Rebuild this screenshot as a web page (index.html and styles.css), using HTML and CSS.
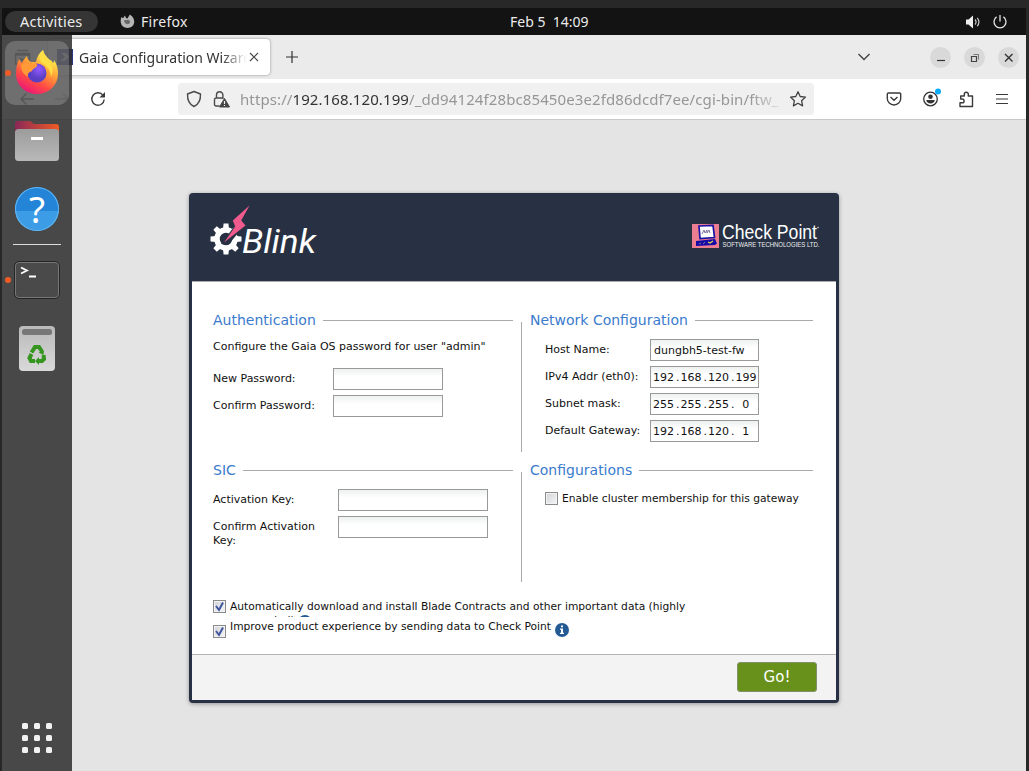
FILE: index.html
```html
<!DOCTYPE html>
<html lang="en">
<head>
<meta charset="utf-8">
<title>Gaia Configuration Wizard</title>
<link rel="stylesheet" href="styles.css">
</head>
<body>
<div class="desktop">
  <header class="topbar">
    <div class="topbar-left">
      <span class="activities"><span class="t-act">Activities</span></span>
      <svg class="app-icon" width="15" height="15" viewBox="0 0 15 15"><path d="M1.5 3 3 4.2 5 1.6 6 4 7.500 4.400 9.800.5C12.500 2 14.500 5 14.200 8.500A6.800 6.500 0 0 1 .8 8.500C.5 6.500.8 4.500 1.500 3Z" fill="#b5b5b5"/><path d="M4 6.500c2-1 2.500 0 4-.8C10.500 6 11 9 8.500 10 6 10.600 4.200 9 4 6.500Z" fill="#686868"/></svg>
      <span class="t-ff">Firefox</span>
    </div>
    <div class="clock">Feb 5&nbsp; 14:09</div>
    <div class="topbar-right">
      <svg width="16" height="16" viewBox="0 0 16 16"><path d="M1 5.500h2.500L8 1.500v13L3.500 10.500H1Z" fill="#eee"/><path d="M10 5.500a3.500 3.500 0 0 1 0 5M12.200 3.800a6 6 0 0 1 0 8.400" fill="none" stroke="#ccc" stroke-width="1.200"/></svg>
      <svg width="16" height="16" viewBox="0 0 16 16" fill="none" stroke="#e4e4e4" stroke-width="1.300"><path d="M4.600 2.900a6 6 0 1 0 6.800 0M8 1v6.500"/></svg>
    </div>
  </header>

  <main class="window">
    <div class="tabbar">
      <svg class="recent" width="17" height="17" viewBox="0 0 17 17" fill="none" stroke="#333" stroke-width="1.400"><path d="M3 1.500h11M1.500 6V4.500h14V15h-14V6h14M6 9l2.500 2.500L11 9"/></svg>
      <div class="tab">
        <svg width="16" height="16" viewBox="0 0 16 16"><path d="M0 0h16v16H0Z" fill="#29367e"/><path d="M4 4h5l3 4-4 4H3l5-4Z" fill="#bbc3e8"/></svg>
        <span class="tab-title">Gaia Configuration Wizard</span>
        <svg class="tab-close" width="10" height="10" viewBox="0 0 10 10"><path d="m1 1 8 8M9 1 1 9" stroke="#444" stroke-width="1.100"/></svg>
      </div>
      <svg class="plus" width="14" height="14" viewBox="0 0 14 14"><path d="M7 1v12M1 7h12" stroke="#333" stroke-width="1.200"/></svg>
      <svg class="chevron" width="14" height="10" viewBox="0 0 14 10"><path d="m1.500 2 5.500 5.500L12.500 2" fill="none" stroke="#444" stroke-width="1.400"/></svg>
      <div class="win-buttons">
        <span class="wb"><svg width="21" height="21"><path d="M7 13.500h8" stroke="#333" stroke-width="1.200"/></svg></span>
        <span class="wb"><svg width="21" height="21" fill="none" stroke="#444"><path d="M7.500 9.500h5v5h-5Z" stroke-width="1.200"/><path d="M9.500 7.500h5v5" stroke="#777"/></svg></span>
        <span class="wb"><svg width="21" height="21"><path d="m7 7 7.500 7.500m0-7.500L7 14.500" stroke="#333" stroke-width="1.400"/></svg></span>
      </div>
    </div>
    <div class="toolbar">
      <svg class="nav-back" width="16" height="16" viewBox="0 0 16 16" fill="none" stroke="#222" stroke-width="1.400"><path d="M15 8H2m5.500-5.500L2 8l5.500 5.500"/></svg>
      <svg class="nav-fwd" width="16" height="16" viewBox="0 0 16 16" fill="none" stroke="#999" stroke-width="1.400"><path d="M1 8h13M8.500 2.500 14 8l-5.500 5.500"/></svg>
      <svg class="reload" width="16" height="16" viewBox="0 0 16 16"><path d="M13 4.300A6.200 6.200 0 1 0 14.200 8.500" fill="none" stroke="#3a3a3a" stroke-width="1.400"/><path d="M15 1v5.500H9.500Z" fill="#3a3a3a"/></svg>
      <div class="urlbar">
        <svg width="16" height="18" viewBox="0 0 16 18"><path d="M8 1.500 14.500 4C14.700 10 12.500 14.500 8 16.500 3.500 14.500 1.300 10 1.500 4Z" fill="none" stroke="#4a4a4a" stroke-width="1.400" stroke-linejoin="round"/></svg>
        <svg class="lock" width="17" height="18" viewBox="0 0 17 18"><path d="M6.500 16H3a1.500 1.500 0 0 1-1.500-1.500v-5A1.500 1.500 0 0 1 3 8h7.500M3.500 8V5a3.200 3.200 0 0 1 6.400 0v4" fill="none" stroke="#4a4a4a" stroke-width="1.400"/><path d="M11.500 8.500 16.500 17h-10Z" fill="#444" stroke="#444" stroke-linejoin="round"/><path d="M11.500 11v3m0 1v1" stroke="#f0f0f0" stroke-width="1.200"/></svg>
        <span class="url">https://<b>192.168.120.199</b>/_dd94124f28bc85450e3e2fd86dcdf7ee/cgi-bin/ftw_</span>
        <svg class="star" width="18" height="18" viewBox="0 0 18 18"><path d="m9 1.700 2.200 4.800 5.300.6-3.900 3.600 1 5.200L9 13.300l-4.600 2.600 1-5.200L1.500 7.100l5.300-.6Z" fill="none" stroke="#444" stroke-width="1.300" stroke-linejoin="round"/></svg>
      </div>
      <div class="tools">
        <svg width="16" height="16" viewBox="0 0 16 16" fill="none" stroke="#3a3a3a" stroke-width="1.400"><path d="M2.500 2h11a1.200 1.200 0 0 1 1.200 1.200v4.300a6.700 6.500 0 0 1-13.400 0V3.200A1.200 1.200 0 0 1 2.500 2ZM4.500 6 8 9.200 11.500 6"/></svg>
        <svg width="22" height="22" viewBox="0 0 22 22"><circle cx="10.500" cy="13" r="6.800" fill="none" stroke="#333" stroke-width="1.300"/><circle cx="10.500" cy="10.800" r="2.300" fill="#333"/><path d="M6.300 14h8.400c0 2-1.900 3.500-4.200 3.500S6.300 16 6.300 14Z" fill="#333"/><circle cx="18" cy="5.500" r="3" fill="#09adfa"/></svg>
        <svg width="16" height="17" viewBox="0 0 16 17"><path d="M2 15.500h12.500V5H10.300V3.200a2 2 0 0 0-4 0V5H2.700v3h1.500a1.900 1.900 0 0 1 0 3.800H2Z" fill="none" stroke="#3a3a3a" stroke-width="1.400" stroke-linejoin="round"/></svg>
        <svg width="14" height="14" viewBox="0 0 14 14"><path d="M1 2.500h12M1 7h12M1 11.500h12" stroke="#3a3a3a" stroke-width="1.200"/></svg>
      </div>
    </div>

    <div class="page">
      <div class="dialog">
        <div class="brand">
          <svg class="blink" width="112" height="54" viewBox="0 0 112 54">
            <g transform="translate(17 34)" fill="#fff"><circle r="9" fill="none" stroke="#fff" stroke-width="5.500"/>
              <path d="M-3-10-2.400-15.500h4.800L3-10ZM-3 10-2.400 15.500h4.800L3 10ZM-10-3-15.500-2.400v4.800L-10 3ZM10-3 15.500-2.400v4.800L10 3Z"/>
              <path transform="rotate(45)" d="M-3-10-2.400-15.500h4.800L3-10ZM-3 10-2.400 15.500h4.800L3 10ZM-10-3-15.500-2.400v4.800L-10 3ZM10-3 15.500-2.400v4.800L10 3Z"/></g>
            <path d="m27 19-15 20 7 1 12-14Z" fill="#273143"/>
            <path d="m9 32 8 8" stroke="none"/>
            <path d="M40.500.5 23.800 15.500l2.400 6L15 37.500 36.500 20.500l-4.300-5Z" fill="#f05a8c"/>
            <text x="33" y="48" class="blink-text" textLength="74" lengthAdjust="spacingAndGlyphs">Blink</text>
          </svg>
          <svg class="cp" width="130" height="26" viewBox="0 0 130 26">
            <path d="M0 1h27v24H0Z" fill="#ed7d91"/>
            <path d="m7 3 14-.5 1.500 12L8 15.500Z" fill="#fff" stroke="#1b13a4" stroke-width="1.700"/>
            <path d="m4 18 19-2 2 4.500-2 1.500-19 1Z" fill="#170ba6"/>
            <path d="m10 11 2-4 1 3 2-3v3l2-3 1 3M7 21l2-1m2 1 2-2" fill="none" stroke="#81739b"/>
            <path d="m16 19 2 1 3-2" fill="none" stroke="#e9d44a" stroke-width="1.300"/>
            <text x="30" y="16" class="cp-name" textLength="95" lengthAdjust="spacingAndGlyphs">Check Point</text>
            <text x="30.500" y="23.500" class="cp-sub" textLength="97" lengthAdjust="spacingAndGlyphs">SOFTWARE TECHNOLOGIES LTD.</text>
            <circle cx="126" cy="4.500" r=".8" fill="#ddd"/>
          </svg>
        </div>
        <div class="content">
          <div class="quad">
            <section>
              <h2>Authentication</h2>
              <p class="note">Configure the Gaia OS password for user "admin"</p>
              <div class="fields auth">
                <label>New Password:</label><span class="input"></span>
                <label>Confirm Password:</label><span class="input"></span>
              </div>
            </section>
            <i class="divider"></i>
            <section>
              <h2>Network Configuration</h2>
              <div class="fields net">
                <label>Host Name:</label><span class="input host">dungbh5-test-fw</span>
                <label>IPv4 Addr (eth0):</label><span class="input ip"><b>192</b>.<b>168</b>.<b>120</b>.<b>199</b></span>
                <label>Subnet mask:</label><span class="input ip"><b>255</b>.<b>255</b>.<b>255</b>.<b>0</b></span>
                <label>Default Gateway:</label><span class="input ip"><b>192</b>.<b>168</b>.<b>120</b>.<b>1</b></span>
              </div>
            </section>
            <section>
              <h2>SIC</h2>
              <div class="fields sic">
                <label>Activation Key:</label><span class="input"></span>
                <label>Confirm Activation Key:</label><span class="input"></span>
              </div>
            </section>
            <i class="divider short"></i>
            <section>
              <h2>Configurations</h2>
              <div class="cluster"><span class="check"></span><span class="cluster-label">Enable cluster membership for this gateway</span></div>
            </section>
          </div>
          <div class="option first">
            <span class="check"><svg width="11" height="11"><path d="m2 5 3 4L9 1.500" fill="none" stroke="#3f569f" stroke-width="2"/></svg></span>
            <span class="clip">Automatically download and install Blade Contracts and other important data (highly recommended) <svg class="info" width="14" height="14" viewBox="0 0 14 14"><circle cx="7" cy="7" r="7" fill="#255b95"/></svg></span>
          </div>
          <div class="option second">
            <span class="check"><svg width="11" height="11"><path d="m2 5 3 4L9 1.500" fill="none" stroke="#3f569f" stroke-width="2"/></svg></span>
            <span class="label">Improve product experience by sending data to Check Point</span>
            <svg class="info2" width="14" height="14" viewBox="0 0 14 14"><circle cx="7" cy="7" r="7" fill="#255b95"/><path d="M6 2.500h2v1.800H6ZM5 5.500h3v4.300h1V11H5V9.800h1V6.700H5Z" fill="#fff"/></svg>
          </div>
        </div>
        <div class="footer"><span class="go">Go!</span></div>
      </div>
    </div>
  </main>

  <nav class="dock">
    <div class="tile">
      <svg width="44" height="46" viewBox="0 0 44 46">
        <defs>
          <linearGradient id="ff" x1=".8" y1="0" x2=".25" y2="1"><stop offset=".1" stop-color="#fff44f"/><stop offset=".4" stop-color="#ffa436"/><stop offset=".7" stop-color="#ff4a45"/><stop offset="1" stop-color="#e8107f"/></linearGradient>
          <radialGradient id="globe" cx=".6" cy=".3"><stop offset="0" stop-color="#9259ff"/><stop offset="1" stop-color="#5a3fc4"/></radialGradient>
        </defs>
        <path d="M4 10c1 2 2 3 3 4 1-3 3-5 5-7 0 3 2 5 4 6h5c1-5 3-9 7-12 1 5 4 7 7 10 1 0 2 1 3 3 1-1 1-2 1-3 3 4 4 9 4 14a21 20 0 0 1-42 0C1 19 2 14 4 10Z" fill="url(#ff)"/>
        <circle cx="22" cy="24" r="9.500" fill="url(#globe)"/>
        <path d="M6 16c5-3 8-3 11-1 4-1 6 0 5 2-1 2-4 2-5 5-3 1-5 3-4 6-5-3-7-7-7-12Z" fill="#ff9a36"/>
        <path d="M28 1c1 5 4 7 6 10 4 5 5 11 2 17 0-7-4-11-9-14-3-2-2-8 1-13Z" fill="#ffdf45"/>
      </svg>
    </div>
    <svg class="files" width="46" height="42" viewBox="0 0 46 42"><defs><linearGradient id="fold"><stop offset="0" stop-color="#8a2858"/><stop offset="1" stop-color="#f05a24"/></linearGradient><linearGradient id="gray" x2="0" y2="1"><stop offset="0" stop-color="#9c9c9c"/><stop offset="1" stop-color="#b9b9b9"/></linearGradient></defs><path d="M1 16V4a3 3 0 0 1 3-3h12l4 3h22a3 3 0 0 1 3 3v9Z" fill="url(#fold)"/><rect x="1" y="9" width="44" height="32" rx="3.500" fill="url(#gray)"/><path d="M17 18.500h12" stroke="#fff" stroke-width="3"/></svg>
    <div class="help">?</div>
    <hr class="sep">
    <div class="terminal"><svg width="44" height="36" viewBox="0 0 44 36"><path d="m6 5.500 6 3-6 3M14 14.500h7" fill="none" stroke="#fff" stroke-width="1.800"/></svg></div>
    <svg class="trash" width="36" height="45" viewBox="0 0 36 45"><defs><linearGradient id="bin" x2="0" y2="1"><stop offset="0" stop-color="#b9b9b9"/><stop offset="1" stop-color="#d9d9d9"/></linearGradient></defs><rect width="36" height="45" rx="4" fill="url(#bin)"/><rect x="3" y="3" width="30" height="6" rx="2.500" fill="#777"/>
      <g transform="translate(18 28)" fill="none" stroke="#35951e" stroke-width="4"><path d="M-5.500-1.500-2-7H2L5-2.500"/><path d="M1.500-1.500 7-3.500 6.500 1Z" fill="#35951e" stroke="none"/><path d="M6.500 1 7 5 5 7H1"/><path d="M-2 7H-6L-7.500 4-5.500 0"/><path d="M2 3v8L-2 7Z" fill="#35951e" stroke="none"/></g></svg>
    <div class="apps"><i></i><i></i><i></i><i></i><i></i><i></i><i></i><i></i><i></i></div>
    <i class="dot dot-ff"></i><i class="dot dot-term"></i>
  </nav>
</div>
</body>
</html>
```
FILE: styles.css
```css
* { box-sizing: border-box; }
body { margin: 0; width: 1029px; height: 771px; overflow: hidden; background: #282828; padding: 8px 3px 0 2px; font-family: "Noto Sans", "Open Sans", sans-serif; }
svg { display: block; flex: none; overflow: visible; }
.desktop { position: relative; height: 763px; display: flex; flex-direction: column; }
.topbar { height: 27px; flex: none; background: #131313; color: #ececec; display: grid; grid-template-columns: 508px 1fr auto; align-items: center; font-size: 14px; line-height: 20px; white-space: nowrap; }
.topbar-left { display: flex; align-items: center; padding-left: 3px; }
.activities { width: 93px; height: 21px; border-radius: 11px; background: #353535; padding-left: 15px; line-height: 21px; }
.t-act { font-size: 14.500px; letter-spacing: .2px; }
.t-ff { letter-spacing: .3px; }
.app-icon { margin: 0 6px 0 22px; }
.clock { letter-spacing: 0; }
.topbar-right { display: flex; gap: 11px; padding-right: 18px; }

.window { flex: 1; display: flex; flex-direction: column; background: #e4e4e4; min-height: 0; }
.tabbar { height: 44px; flex: none; background: #ebebeb; display: flex; align-items: center; padding: 0 7px 0 12px; }
.tab { margin-left: 17px; width: 222px; height: 36px; border-radius: 4px; background: #fff; box-shadow: 0 0 3px rgba(0,0,0,.4); display: flex; align-items: center; padding-left: 9px; }
.tab-title { margin-left: 6px; width: 168px; overflow: hidden; white-space: nowrap; font-size: 14px; color: #333; -webkit-mask-image: linear-gradient(90deg, #000 143px, transparent 168px); mask-image: linear-gradient(90deg, #000 143px, transparent 168px); }
.tab-close { margin-left: 2px; }
.plus { margin-left: 15px; }
.chevron { margin-left: auto; }
.win-buttons { display: flex; gap: 13px; margin-left: 59px; }
.wb { width: 21px; height: 21px; border-radius: 50%; background: #d9d9d9; }
.toolbar { height: 41px; flex: none; background: #fff; border-bottom: 1px solid #c9c9c9; display: flex; align-items: center; padding-left: 17px; }
.nav-fwd { margin-left: 19px; }
.reload { margin-left: 20px; }
.urlbar { margin-left: 72px; width: 636px; height: 32px; border-radius: 4px; background: #f0f0f0; display: flex; align-items: center; padding-left: 8px; }
.lock { margin-left: 11px; }
.url { margin-left: 10px; width: 544px; overflow: hidden; white-space: nowrap; font-size: 15px; letter-spacing: .1px; color: #969696; -webkit-mask-image: linear-gradient(90deg, #000 510px, transparent 548px); mask-image: linear-gradient(90deg, #000 510px, transparent 548px); }
.url b { font-weight: 400; color: #333; }
.star { margin-left: 5px; }
.tools { display: flex; align-items: center; margin-left: 72px; }
.tools svg:nth-child(2) { margin: -4px 0 0 18px; }
.tools svg:nth-child(3) { margin-left: 16px; }
.tools svg:nth-child(4) { margin-left: 21px; }

.page { padding: 73px 0 0 187px; }
.dialog { width: 650px; height: 510px; background: #273143; border-radius: 4px; padding: 0 3px 3px; box-shadow: 0 1px 4px rgba(0,0,0,.35); display: flex; flex-direction: column; font: 11px/14px "DejaVu Sans", sans-serif; color: #111; }
.brand { height: 88px; flex: none; display: flex; justify-content: space-between; padding: 12px 14px 0 17px; }
.blink-text { font: italic 33px "Roboto", sans-serif; fill: #fff; }
.cp { margin-top: 18px; }
.cp-name { font: 20px "Liberation Sans", sans-serif; fill: #fff; }
.cp-sub { font: 7.500px "Liberation Sans", sans-serif; fill: #eee; }
.content { flex: 1; background: #fff; border-top: 1px solid #aaa; padding: 28px 20px 0 21px; min-height: 0; }
.quad { display: grid; grid-template-columns: 300px 1px 283px; column-gap: 8px; grid-template-rows: 150px 139px; }
h2 { margin: 0; font-size: 14px; font-weight: 400; line-height: 20px; color: #3a7bcd; display: flex; align-items: center; }
h2::after { content: ""; flex: 1; height: 1px; background: #aaa; margin: 1px 0 0 7px; }
.divider { height: 130px; margin-top: 12px; background: #aaa; }
.divider.short { height: 110px; }
.note { margin: 10px 0 14px; }
.fields { display: grid; row-gap: 5px; grid-auto-rows: 22px; }
.fields label { padding-top: 4px; }
.auth { grid-template-columns: 120px 110px; }
.net { grid-template-columns: 105px 109px; padding: 9px 0 0 15px; }
.sic { grid-template-columns: 125px 150px; padding-top: 9px; }
.sic label { width: 110px; }
.input { height: 22px; border: 1px solid #999; background: linear-gradient(#eef1f1, #fff 8px); line-height: 21px; }
.host { padding-left: 3px; }
.ip { display: flex; padding-left: 2px; }
.ip b { font-weight: 400; width: 21px; text-align: center; margin-right: 2px; }
.ip b:not(:first-child) { margin-left: 1px; }
.cluster { display: flex; gap: 4px; padding: 12px 0 0 15px; white-space: nowrap; }
.check { width: 13px; height: 13px; flex: none; border: 1px solid #8b8b8b; background: linear-gradient(135deg, #cfd2d7, #f7f7f7); box-shadow: inset 0 0 0 1px #f3f3f3; }
.cluster-label, .clip, .label { font-size: 10.700px; }
.option { display: flex; }
.option .check { margin-top: 1px; }
.clip { margin: 1px 0 0 -13px; width: 480px; height: 17px; overflow: hidden; text-indent: 17px; }
.info { display: inline-block; vertical-align: -5px; }
.second { padding-top: 2px; }
.second .check { margin-top: 6px; }
.label { margin: 1px 0 0 4px; white-space: nowrap; }
.info2 { margin: 4px 0 0 4px; }
.footer { height: 46px; flex: none; background: #f3f3f3; border-top: 1px solid #b4b4b4; display: flex; justify-content: flex-end; padding: 7px 19px 0 0; }
.go { width: 80px; height: 30px; border: 1px solid #83916b; border-radius: 3px; background: #67911b; color: #fff; font-size: 15px; line-height: 28px; text-align: center; }

.dock { position: absolute; left: 0; top: 27px; width: 70px; height: 736px; background: rgba(46,46,46,.86); display: flex; flex-direction: column; align-items: center; }
.tile { width: 64px; height: 64px; margin: 6px 0 0; border-radius: 10px; background: rgba(255,255,255,.2); display: flex; justify-content: center; padding-top: 8px; }
.files { margin-top: 15px; }
.help { width: 44px; height: 44px; margin-top: 25px; border-radius: 50%; background: linear-gradient(#2384d8 55%, #3c9de6 55%); box-shadow: inset 0 0 0 1px #62b6f2; color: #fff; font-size: 37px; line-height: 44px; text-align: center; }
.sep { width: 48px; height: 1px; border: 0; margin: 13px 0 0; background: #ddd; }
.terminal { width: 46px; height: 38px; margin-top: 16px; border: 1px solid #252525; border-radius: 5px; background: #4a4a4a; box-shadow: inset 0 0 0 1px #777; }
.trash { margin-top: 27px; }
.apps { display: grid; grid-template-columns: repeat(3, 6px); grid-auto-rows: 6px; gap: 6px; margin-top: auto; margin-bottom: 18px; }
.apps i { background: #f2f2f2; border-radius: 1.500px; }
.dot { position: absolute; width: 6px; height: 6px; border-radius: 50%; left: 3px; background: #f15a24; }
.dot-ff { top: 35px; }
.dot-term { top: 242px; }
```
